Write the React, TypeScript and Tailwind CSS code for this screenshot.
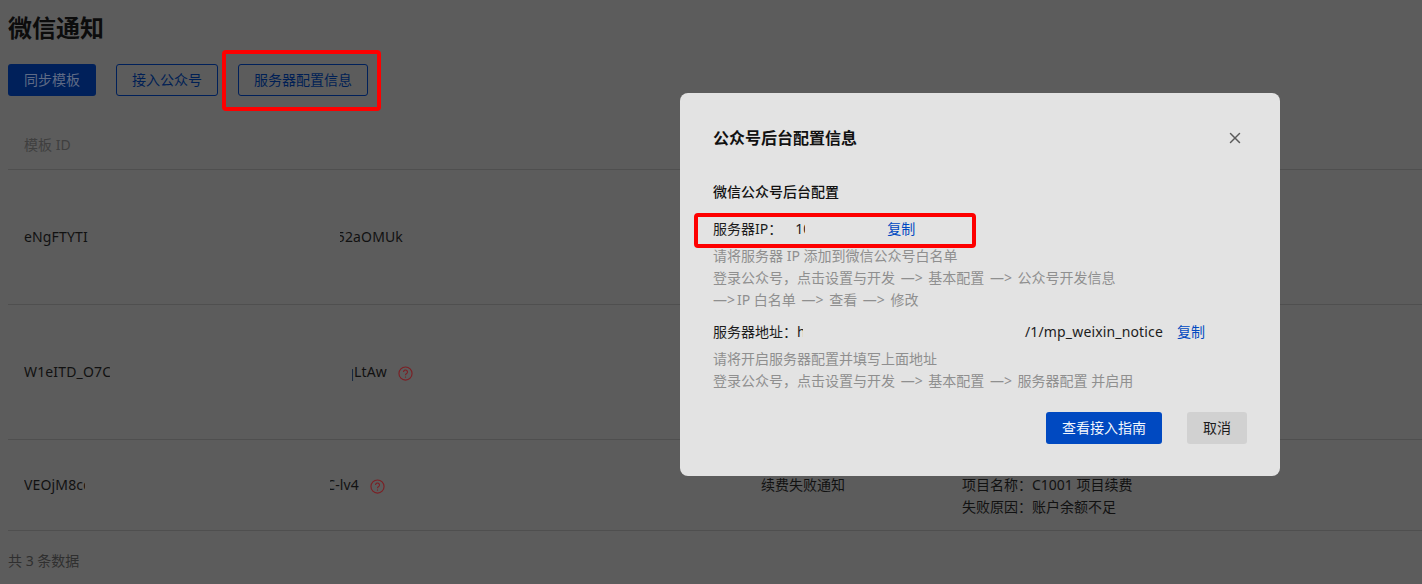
import { X } from "lucide-react";

const FONT = '"Noto Sans", "Noto Sans CJK SC", sans-serif';

function HelpIcon() {
  return (
    <svg viewBox="0 0 16 16" className="ml-[11px] mt-[3px] h-[15px] w-[15px] shrink-0" fill="none" stroke="#7c1f24" strokeWidth="1.2">
      <circle cx="8" cy="8" r="7" />
      <path d="M5.9 6.4a2.1 2.1 0 1 1 3.3 1.7c-.8.5-1.2.9-1.2 1.8" />
      <path d="M8 11.2v1.2" />
    </svg>
  );
}

function Arrow() {
  return <span className="mx-[2px]">—&gt;</span>;
}

function Row({
  height,
  head,
  headWidth,
  tail,
  tailClass,
  help,
  title,
  lines,
}: {
  height: string;
  head: string;
  headWidth: string;
  tail: string;
  tailClass: string;
  help?: boolean;
  title?: string;
  lines?: string[];
}) {
  return (
    <div className={`grid grid-cols-[306px_431px_201px_1fr] items-center border-b border-[#4f4f4f] pl-4 text-sm text-[#111] ${height}`}>
      <div className={`overflow-hidden whitespace-nowrap tracking-[0.15px] ${headWidth}`}>{head}</div>
      <div className="flex items-center">
        <div className={`flex justify-end overflow-hidden whitespace-nowrap tracking-[0.15px] ${tailClass}`}>{tail}</div>
        {help && <HelpIcon />}
      </div>
      <div>{title}</div>
      <div className="leading-[22px]">
        {lines && <div className="h-[22px]" />}
        {lines?.map((l) => (
          <div key={l}>{l}</div>
        ))}
      </div>
    </div>
  );
}

export default function App() {
  return (
    <div className="relative h-[584px] w-[1422px] overflow-hidden bg-[#5c5c5c] pl-2" style={{ fontFamily: FONT }}>
      <h1 className="pt-3 text-2xl leading-8 font-bold text-[#0c0c0c]">微信通知</h1>

      <div className="mt-5 flex gap-5 text-sm">
        <button className="h-8 w-[88px] rounded-[3px] bg-[#00205a] text-[#5f6b85]">同步模板</button>
        <button className="h-8 w-[102px] rounded-[3px] border border-[#00205a] text-[#001f55]">接入公众号</button>
        <button className="h-8 w-[130px] rounded-[3px] border border-[#00205a] text-[#001f55]">服务器配置信息</button>
      </div>

      <div className="mt-6 flex h-[50px] items-center border-b border-[#4f4f4f] pl-4 text-sm text-[#3f3f3f]">模板 ID</div>
      <Row height="h-[135px]" head="eNgFTYTIk" headWidth="w-[64px]" tail="52aOMUk" tailClass="ml-[10px] w-[63px]" />
      <Row height="h-[135px]" head="W1eITD_O7CX" headWidth="w-[86px]" tail="qLtAw" tailClass="ml-[22px] w-[35px]" help />
      <Row
        height="h-[91px]"
        head="VEOjM8cd"
        headWidth="w-[61px]"
        tail="C-lv4"
        tailClass="w-[29px]"
        help
        title="续费失败通知"
        lines={["项目名称：C1001 项目续费", "失败原因：账户余额不足"]}
      />
      <div className="pt-5 text-sm text-[#2f2f2f]">共 3 条数据</div>

      {/* annotation on the button */}
      <div className="absolute top-[50px] left-[222px] h-[61px] w-[159px] rounded-[4px] border-[4px] border-[#fe0000]" />

      {/* dialog */}
      <div className="absolute top-[93px] left-[680px] h-[383px] w-[600px] rounded-lg bg-[#e3e3e3] px-[33px] pt-[33px] text-sm text-[#1c1c1c]">
        <div className="flex items-center justify-between">
          <div className="text-base leading-6 font-bold text-[#111]">公众号后台配置信息</div>
          <X className="mr-[3px] h-[18px] w-[18px] text-[#5a5a5a]" strokeWidth={2} />
        </div>

        <div className="mt-[30px] leading-6 font-medium text-[#111]">微信公众号后台配置</div>

        <div className="mt-[14px] flex h-[22px] items-center">
          <span className="whitespace-nowrap">服务器IP：</span>
          <span className="ml-[13px] w-[10px] shrink-0 overflow-hidden whitespace-nowrap">10</span>
          <span className="ml-[82px] text-[#0049c1]">复制</span>
        </div>
        <div className="mt-[5px] leading-[22px] text-[#8f8f8f]">
          <div>请将服务器 IP 添加到微信公众号白名单</div>
          <div>
            登录公众号，点击设置与开发 <Arrow /> 基本配置 <Arrow /> 公众号开发信息
          </div>
          <div>
            <span className="mr-[2px]">—&gt;</span>
            IP 白名单 <Arrow /> 查看 <Arrow /> 修改
          </div>
        </div>

        <div className="mt-[10px] flex h-[22px] items-center">
          <span className="w-[90px] shrink-0 overflow-hidden whitespace-nowrap">服务器地址：https</span>
          <span className="ml-[222px] whitespace-nowrap tracking-[0.15px]">/1/mp_weixin_notice</span>
          <span className="ml-[14px] text-[#0049c1]">复制</span>
        </div>
        <div className="mt-[5px] leading-[22px] text-[#8f8f8f]">
          <div>请将开启服务器配置并填写上面地址</div>
          <div>
            登录公众号，点击设置与开发 <Arrow /> 基本配置 <Arrow /> 服务器配置 并启用
          </div>
        </div>

        <div className="mt-5 flex justify-end gap-[25px]">
          <button className="h-8 w-[116px] rounded-[3px] bg-[#0049c1] text-[#f2f6fc]">查看接入指南</button>
          <button className="h-8 w-[60px] rounded-[3px] bg-[#d1d1d1] text-[#1c1c1c]">取消</button>
        </div>
      </div>

      {/* annotation on the server IP */}
      <div className="absolute top-[213px] left-[694px] h-[35px] w-[282px] rounded-[4px] border-[4px] border-[#fe0000]" />
    </div>
  );
}
